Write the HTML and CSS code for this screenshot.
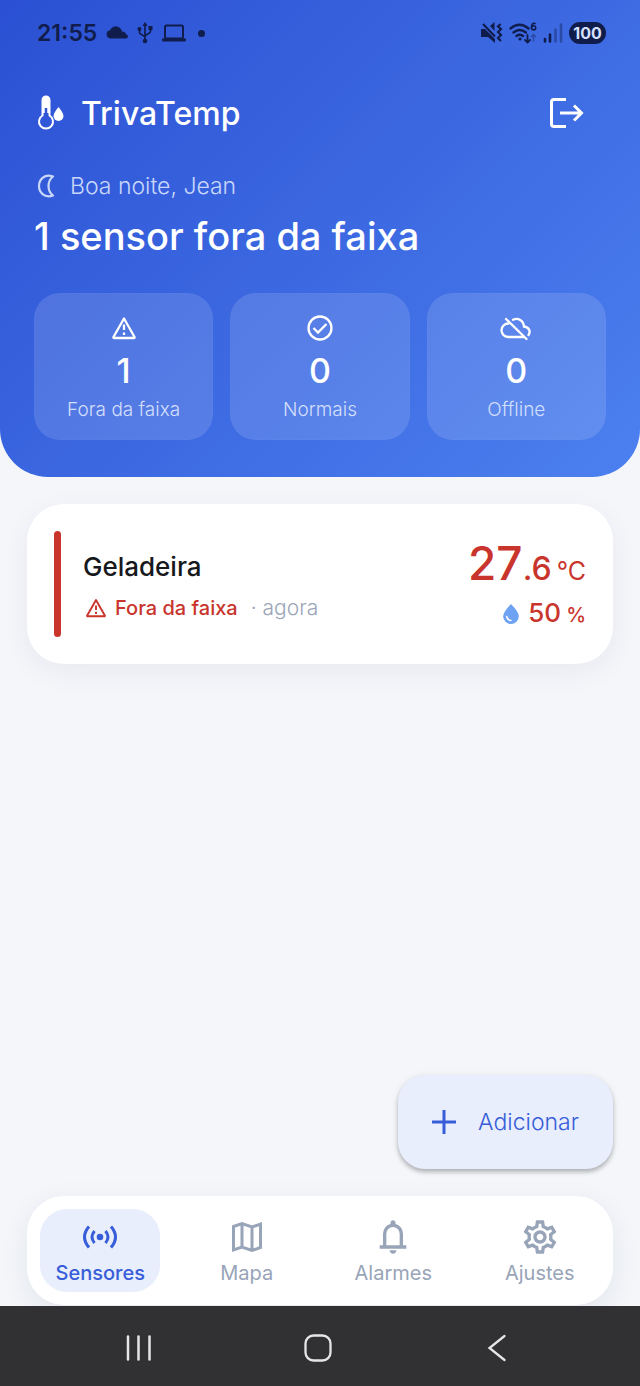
FILE: index.html
```html
<!DOCTYPE html>
<html lang="pt-BR">
<head>
    <meta charset="UTF-8">
    <meta name="viewport" content="width=device-width, initial-scale=1.0">
    <title>TrivaTemp</title>
    <link rel="stylesheet" href="styles.css">
</head>
<body>

    <header class="header">
        <div class="status-bar">
            <span class="clock">21:55</span>
            <svg class="cloud" width="22" height="14" viewBox="0 0 22 14"><path d="M4.500 12.500a4.200 4.200 0 0 1-.5-8.300A6.200 6.200 0 0 1 14.500 2.500q1.200 1.300 1.500 3A3.700 3.700 0 0 1 20 8q2 1 2 2.500t-2 2z" fill="currentColor"/></svg>
            <svg class="usb" width="16" height="22" viewBox="0 0 16 22" fill="none" stroke="currentColor" stroke-width="1.700"><path d="M8 3v15M2.500 8v2.500c0 2.500 5.500 2.500 5.500 5M13.500 6v3.500c0 2.500-5.500 2.500-5.500 5"/><path d="M8 0l2.600 4H5.400zM11.500 4h4v4h-4z" fill="currentColor" stroke="none"/><circle cx="2.500" cy="7" r="2" fill="currentColor" stroke="none"/><circle cx="8" cy="19" r="2.300" fill="currentColor" stroke="none"/></svg>
            <svg class="laptop" width="24" height="20" viewBox="0 0 24 20"><rect x="3" y="2.500" width="18" height="13" rx="1.500" fill="none" stroke="currentColor" stroke-width="2"/><path d="M0 15.500h24v1.500q0 1.500-1.500 1.500h-21q-1.500 0-1.500-1.500z" fill="currentColor"/></svg>
            <span class="dot"></span>
            <div class="status-right">
                <svg width="22" height="22" viewBox="0 0 22 22"><path d="M0 7h4l10 10v4l-7-6H0zM9 4l4.500-4v9z" fill="currentColor"/><path d="M2 2l12 12.500M19.500 2l-2.500 2.500 3 2.500-3 3 3 3-3 3 3 3" fill="none" stroke="currentColor" stroke-width="2.200"/></svg>
                <svg width="28" height="22" viewBox="0 0 28 22" fill="none" stroke="currentColor" stroke-width="2.300" stroke-linecap="round"><path d="M1.500 6.500q9-7.500 18 0M4.500 10.500q6-5 12.500 0M7.500 14q3.500-2.500 6.500 0"/><circle cx="11" cy="17" r="1.600" fill="currentColor" stroke="none"/><path d="M18.500 13v7M16 18l2.500 2.500 2.500-2.500" stroke-width="1.800"/><path d="M24.500 19v-6M22.500 14.500l2-2 2 2" stroke-width="1.500" opacity=".4"/><path d="M26 1.500q-3.500-1-3.500 4" stroke-width="1.600"/><circle cx="24.600" cy="5.800" r="2.100" stroke-width="1.600"/></svg>
                <svg width="20" height="22" viewBox="0 0 20 22" fill="none" stroke="currentColor" stroke-width="2.600" stroke-linecap="round"><path d="M2 17v2.500M7 12.500v7"/><path d="M12.500 7.500v12M18 2.500v17" opacity=".4"/></svg>
                <span class="battery">100</span>
            </div>
        </div>

        <div class="top-row">
            <svg width="28" height="36" viewBox="0 0 28 36"><path d="M5.500 18V5.500a3.500 3.500 0 0 1 7 0V18" fill="#fff"/><path d="M5.500 20.500V5a3.500 3.500 0 0 1 7 0v15.500a7 7 0 1 1-7 0z" fill="none" stroke="#fff" stroke-width="2"/><path d="M9 13v9" stroke="#3056d6" stroke-width="2.500"/><path d="M21.500 12q5 6 5 9a5 5 0 0 1-10 0q0-3 5-9z" fill="#fff"/></svg>
            <span class="brand">TrivaTemp</span>
            <button class="logout" aria-label="Sair">
                <svg width="36" height="34" viewBox="0 0 36 34" fill="none" stroke="currentColor" stroke-width="3"><path d="M18 3.500H6q-2.500 0-2.500 2.500v22q0 2.500 2.500 2.500h12M12 17h21M26 9.500l7.500 7.500-7.500 7.500"/></svg>
            </button>
        </div>

        <div class="greeting">
            <svg width="20" height="24" viewBox="0 0 20 24" fill="none" stroke="currentColor" stroke-width="2.200" stroke-linejoin="round"><path d="M16 2.500C7-.5 2 6 2 12s5 12.500 14 9.500Q11.500 18 11.500 12T16 2.500z"/></svg>
            <span>Boa noite, Jean</span>
        </div>
        <h1>1 sensor fora da faixa</h1>

        <div class="stats">
            <div class="stat">
                <svg width="34" height="34" viewBox="0 0 34 34" fill="none" stroke="currentColor" stroke-width="2.300" stroke-linejoin="round"><path d="M17 7.500L27.500 26q.4 1-.7 1H7.200q-1.100 0-.7-1z"/><path d="M17 13.500v5.500M17 21.500v2.600"/></svg>
                <strong>1</strong>
                <span>Fora da faixa</span>
            </div>
            <div class="stat">
                <svg width="34" height="34" viewBox="0 0 34 34" fill="none" stroke="currentColor" stroke-width="2.300"><circle cx="17" cy="17" r="11.500"/><path d="M10.500 17l4.500 4.500 8.500-8.500"/></svg>
                <strong>0</strong>
                <span>Normais</span>
            </div>
            <div class="stat">
                <svg width="34" height="34" viewBox="0 0 34 34" fill="none" stroke="currentColor" stroke-width="2.300" stroke-linecap="round"><path d="M7 8l20.500 20M9.500 12.500a6.500 6.500 0 0 0-.5 13.500h15.500M14 8.800c5-2.500 10.500.5 11 6.700 5 .5 7 5 4.500 8.500"/></svg>
                <strong>0</strong>
                <span>Offline</span>
            </div>
        </div>
    </header>

    <main class="content">
        <article class="sensor">
            <div class="sensor-bar"></div>
            <div class="sensor-info">
                <h2>Geladeira</h2>
                <div class="sensor-status">
                    <svg width="26" height="26" viewBox="0 0 26 26" fill="none" stroke="#c9352d" stroke-width="1.900" stroke-linejoin="round"><path d="M13 5l8.800 15.500q.4.800-.6.800H4.800q-1 0-.6-.8z"/><path d="M13 10.500v4.500M13 16.800v2.200"/></svg>
                    <span class="alert-text">Fora da faixa</span>
                    <span class="ago">· agora</span>
                </div>
            </div>
            <div class="reading">
                <div class="temp">27<span class="decimal">.6</span><span class="unit">°C</span></div>
                <div class="humidity">
                    <svg width="16" height="20" viewBox="0 0 16 20"><path d="M8 0q7.800 8 7.800 12.200a7.800 7.800 0 0 1-15.600 0Q.2 8 8 0z" fill="#6ea2f2"/><path d="M3.700 12.500q.7 3.500 4.300 4" fill="none" stroke="#fff" stroke-width="1.500" stroke-linecap="round"/></svg>
                    <span>50<small>%</small></span>
                </div>
            </div>
        </article>
    </main>

    <footer class="footer">
        <button class="add-button">
            <svg width="24" height="24" viewBox="0 0 24 24" stroke="currentColor" stroke-width="3"><path d="M0 12h24M12 0v24"/></svg>
            <span>Adicionar</span>
        </button>

        <nav class="tabs">
            <a class="tab active" href="#sensores">
                <svg width="40" height="40" viewBox="0 0 40 40" fill="none" stroke="currentColor" stroke-width="3"><circle cx="20" cy="20" r="3.300" fill="currentColor" stroke="none"/><path d="M14.500 14q-5 6 0 12M25.500 14q5 6 0 12M9 9.500q-9 10.500 0 21M31 9.500q9 10.500 0 21"/></svg>
                <span>Sensores</span>
            </a>
            <a class="tab" href="#mapa">
                <svg width="40" height="40" viewBox="0 0 40 40" fill="none" stroke="currentColor" stroke-width="3"><path d="M6.500 9.500L15 6.500l10 3.500 8.500-3v23.500L25 33.500 15 30l-8.500 3zM15 6.500V30M25 10v23.500"/></svg>
                <span>Mapa</span>
            </a>
            <a class="tab" href="#alarmes">
                <svg width="40" height="40" viewBox="0 -960 960 960" fill="currentColor"><path d="M160-200v-80h80v-280q0-83 50-147.500T420-792v-28q0-25 17.500-42.500T480-880t42.500 17.500T540-820v28q80 20 130 84.500T720-560v280h80v80H160Zm320 120q-33 0-56.500-23.500T400-160h160q0 33-23.500 56.500T480-80ZM320-280h320v-280q0-66-47-113t-113-47q-66 0-113 47t-47 113v280Z"/></svg>
                <span>Alarmes</span>
            </a>
            <a class="tab" href="#ajustes">
                <svg width="40" height="40" viewBox="0 0 24 24" fill="currentColor"><path d="M19.430 12.980c.04-.32.07-.64.07-.98 0-.34-.03-.66-.07-.98l2.110-1.650c.19-.15.24-.42.12-.64l-2-3.460c-.09-.16-.26-.25-.44-.25-.06 0-.12.01-.17.03l-2.490 1c-.52-.4-1.080-.73-1.690-.98l-.38-2.650C14.460 2.180 14.250 2 14 2h-4c-.25 0-.46.18-.49.42l-.38 2.650c-.61.25-1.170.59-1.690.98l-2.490-1c-.06-.02-.12-.03-.18-.03-.17 0-.34.09-.43.25l-2 3.460c-.13.22-.07.49.12.64l2.110 1.650c-.04.32-.07.65-.07.98 0 .33.03.66.07.98l-2.110 1.650c-.19.15-.24.42-.12.64l2 3.460c.09.16.26.25.44.25.06 0 .12-.01.17-.03l2.490-1c.52.4 1.080.73 1.690.98l.38 2.650c.03.24.24.42.49.42h4c.25 0 .46-.18.49-.42l.38-2.650c.61-.25 1.170-.59 1.690-.98l2.490 1c.06.02.12.03.18.03.17 0 .34-.09.43-.25l2-3.460c.12-.22.07-.49-.12-.64l-2.110-1.650zm-1.980-1.710c.04.31.05.52.05.73 0 .21-.02.43-.05.73l-.14 1.130.89.7 1.080.84-.7 1.210-1.270-.51-1.040-.42-.9.68c-.43.32-.84.56-1.250.73l-1.060.43-.16 1.130-.2 1.350h-1.400l-.19-1.350-.16-1.130-1.060-.43c-.43-.18-.83-.41-1.230-.71l-.91-.7-1.060.43-1.270.51-.7-1.210 1.080-.84.89-.7-.14-1.130c-.03-.31-.05-.54-.05-.74s.02-.43.05-.73l.14-1.130-.89-.7-1.080-.84.7-1.210 1.270.51 1.040.42.9-.68c.43-.32.84-.56 1.250-.73l1.060-.43.16-1.130.2-1.350h1.390l.19 1.350.16 1.130 1.060.43c.43.18.83.41 1.230.71l.91.7 1.060-.43 1.270-.51.7 1.210-1.070.85-.89.7.14 1.130zM12 8c-2.210 0-4 1.790-4 4s1.790 4 4 4 4-1.790 4-4-1.790-4-4-4zm0 6c-1.100 0-2-.9-2-2s.9-2 2-2 2 .9 2 2-.9 2-2 2z"/></svg>
                <span>Ajustes</span>
            </a>
        </nav>
    </footer>

    <div class="system-bar">
        <button aria-label="Recentes">
            <svg width="28" height="28" viewBox="0 0 28 28" stroke="currentColor" stroke-width="2.500" stroke-linecap="round"><path d="M3 2.500v23M13.500 2.500v23M24.500 2.500v23"/></svg>
        </button>
        <button aria-label="Início">
            <svg width="28" height="28" viewBox="0 0 28 28" fill="none" stroke="currentColor" stroke-width="2.300"><rect x="1.500" y="1.500" width="25" height="25" rx="8"/></svg>
        </button>
        <button aria-label="Voltar">
            <svg width="28" height="28" viewBox="0 0 28 28" fill="none" stroke="currentColor" stroke-width="2.300" stroke-linecap="round"><path d="M21.500 2L6.500 14l15 12"/></svg>
        </button>
    </div>

</body>
</html>
```
FILE: styles.css
```css
* {
    box-sizing: border-box;
}

body {
    margin: 0;
    min-height: 100vh;
    display: flex;
    flex-direction: column;
    background-color: #f4f6fa;
    font-family: Inter, "Liberation Sans", sans-serif;
}

h1, h2 {
    margin: 0;
    font-weight: 500;
}

svg {
    display: block;
    flex-shrink: 0;
}

button {
    border: none;
    padding: 0;
    background: none;
    font-family: inherit;
    cursor: pointer;
}

/* Header */
.header {
    padding: 17px 34px 37px;
    border-radius: 0 0 48px 48px;
    background: linear-gradient(135deg, #2b50d3, #4c80ef);
    color: #fff;
}

.status-bar {
    display: flex;
    align-items: center;
    height: 32px;
    padding-left: 3px;
    color: #101d4c;
}

.clock {
    font-size: 23px;
    font-weight: 600;
}

.cloud, .usb, .laptop {
    margin-left: 9px;
}

.dot {
    width: 7px;
    height: 7px;
    margin-left: 12px;
    border-radius: 50%;
    background-color: #101d4c;
}

.status-right {
    display: flex;
    align-items: center;
    gap: 6px;
    margin-left: auto;
}

.battery {
    width: 37px;
    border-radius: 11px;
    background-color: #101d4c;
    color: #d5e0ff;
    font-size: 16px;
    font-weight: 700;
    line-height: 22px;
    text-align: center;
}

.top-row {
    display: flex;
    align-items: center;
    height: 48px;
    margin-top: 40px;
    padding-left: 3px;
    padding-right: 22px;
}

.brand {
    margin-left: 16px;
    font-size: 32px;
    font-weight: 500;
}

.logout {
    margin-left: auto;
    color: #fff;
}

.greeting {
    display: flex;
    align-items: center;
    gap: 13px;
    margin-top: 34px;
    padding-left: 3px;
    color: #c9d7fb;
    font-size: 23px;
    font-weight: 300;
    line-height: 30px;
}

h1 {
    margin-top: 9px;
    font-size: 38px;
    line-height: 52px;
}

.stats {
    display: grid;
    grid-template-columns: repeat(3, 1fr);
    gap: 17px;
    margin-top: 31px;
}

.stat {
    display: flex;
    flex-direction: column;
    align-items: center;
    padding: 18px 8px 16px;
    border-radius: 26px;
    background-color: rgba(255, 255, 255, 0.13);
    box-shadow: inset 0 0 0 1px rgba(255, 255, 255, 0.02);
}

.stat strong {
    margin: 4px 0 3px;
    font-size: 34px;
    font-weight: 500;
    line-height: 44px;
}

.stat span {
    color: #d3dffc;
    font-size: 19px;
    font-weight: 300;
    line-height: 28px;
}

/* Sensor list */
.content {
    flex: 1;
    padding: 27px;
}

.sensor {
    display: flex;
    align-items: center;
    padding: 27px;
    border-radius: 37px;
    background-color: #fff;
    box-shadow: 0 8px 28px rgba(30, 40, 80, 0.06);
}

.sensor-bar {
    width: 7px;
    height: 106px;
    margin-right: 22px;
    border-radius: 4px;
    background-color: #c9352d;
}

.sensor-info {
    flex: 1;
    padding-top: 4px;
}

.sensor-info h2 {
    color: #17181c;
    font-size: 26px;
    line-height: 36px;
}

.sensor-status {
    display: flex;
    align-items: center;
    margin-top: 8px;
    font-size: 20px;
    line-height: 30px;
}

.alert-text {
    margin-left: 6px;
    color: #c9352d;
    font-weight: 500;
}

.ago {
    margin-left: 13px;
    color: #9aa5b8;
    font-size: 21px;
    font-weight: 300;
}

.reading {
    display: flex;
    flex-direction: column;
    align-items: flex-end;
    color: #c9352d;
    font-weight: 500;
}

.temp {
    font-size: 46px;
    line-height: 60px;
    white-space: nowrap;
}

.decimal, .unit {
    line-height: 1;
}

.decimal {
    font-size: 32px;
}

.unit {
    margin-left: 5px;
    font-size: 25px;
    font-weight: 400;
}

.humidity {
    display: flex;
    align-items: center;
    gap: 9px;
    font-size: 26px;
    line-height: 40px;
}

.humidity small {
    margin-left: 5px;
    font-size: 20px;
}

/* Bottom area */
.footer {
    display: flex;
    flex-direction: column;
    align-items: flex-end;
    gap: 27px;
    padding: 0 27px;
}

.add-button {
    display: flex;
    align-items: center;
    gap: 22px;
    height: 94px;
    padding: 0 34px;
    border-radius: 27px;
    background-color: #e8eefc;
    box-shadow: 0 3px 4px rgba(0, 0, 0, 0.25), 0 1px 10px rgba(0, 0, 0, 0.06);
    color: #375dd8;
    font-size: 23px;
    font-weight: 300;
}

.tabs {
    display: grid;
    grid-template-columns: repeat(4, 1fr);
    width: 100%;
    padding: 13px 0;
    border-radius: 37px;
    background-color: #fff;
    box-shadow: 0 8px 28px rgba(30, 40, 80, 0.08);
}

.tab {
    display: flex;
    flex-direction: column;
    align-items: center;
    justify-self: center;
    width: 120px;
    padding: 8px 0 3px;
    border-radius: 27px;
    color: #98a4b8;
    font-size: 20px;
    font-weight: 400;
    line-height: 32px;
    text-decoration: none;
}

.tab.active {
    background-color: #e8eefc;
    color: #375dd8;
    font-weight: 500;
}

.system-bar {
    position: relative;
    display: grid;
    grid-template-columns: repeat(3, 1fr);
    justify-items: center;
    align-items: center;
    height: 80px;
    margin-top: 1px;
    padding: 4px 54px 0 49px;
    background-color: #313133;
}

.system-bar button {
    color: #e6e6e8;
}
```
